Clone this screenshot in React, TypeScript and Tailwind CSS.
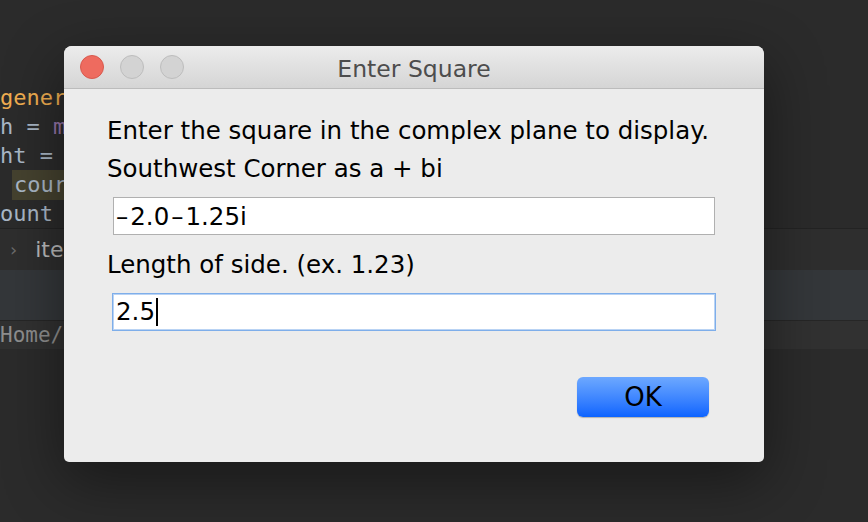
export default function App() {
  return (
    <div className="relative w-[868px] h-[522px] overflow-hidden bg-[#2b2b2b]">
      {/* Editor behind the dialog */}
      <div className="flex flex-col pt-[83px] font-['DejaVu_Sans_Mono',monospace] text-[22px] leading-[29px] text-[#a9b7c6]">
        <div className="h-[29px] whitespace-pre text-[#f0ad50]">gener</div>
        <div className="h-[29px] whitespace-pre">
          h = <span className="text-[#9876aa]">m</span>
        </div>
        <div className="h-[29px] whitespace-pre">ht = </div>
        <div className="h-[29px] whitespace-pre">
          <span className="ml-[12px] inline-block h-[30px] w-[80px] bg-[#45422f] pl-[2px]">cour</span>
        </div>
        <div className="h-[29px] whitespace-pre">ount</div>

        <div className="h-[1px] bg-[#232323]" />
        <div className="flex h-[41px] items-center gap-[18px] bg-[#2e2e2e] pl-[10px] font-['DejaVu_Sans',sans-serif] text-[22px] text-[#bbbbbb]">
          <span className="text-[18px] text-[#6b6b6b]">›</span>
          <span>iter</span>
        </div>
        <div className="h-[50px] bg-[#34373a]" />
        <div className="h-[1px] bg-[#262626]" />
        <div className="flex h-[28px] items-center bg-[#313131] text-[21px] text-[#8e8e8e]">Home/</div>
      </div>

      {/* Dialog */}
      <div className="absolute left-[64px] top-[46px] flex h-[416px] w-[700px] flex-col overflow-hidden rounded-t-[8px] rounded-b-[5px] bg-[#ececec] font-['DejaVu_Sans',sans-serif] shadow-[0_18px_60px_rgba(0,0,0,0.45)]">
        <div className="grid h-[43px] grid-cols-[1fr_auto_1fr] items-center border-b border-[#bcbcbc] bg-gradient-to-b from-[#ececec] to-[#d5d5d5]">
          <div className="flex items-center gap-[16px] pl-[16px]">
            <div className="h-[24px] w-[24px] rounded-full border border-[#d8594d] bg-[#ee6b5f]" />
            <div className="h-[24px] w-[24px] rounded-full border border-[#bdbdbd] bg-[#d3d3d3]" />
            <div className="h-[24px] w-[24px] rounded-full border border-[#bdbdbd] bg-[#d3d3d3]" />
          </div>
          <div className="pt-[3px] text-[23.5px] leading-[30px] text-[#4d4d4d]">Enter Square</div>
          <div />
        </div>

        <div className="flex flex-1 flex-col pl-[43px] pr-[49px] pt-[27px] text-[24.5px] leading-[30px] text-black">
          <div>Enter the square in the complex plane to display.</div>
          <div className="mt-[8px]">Southwest Corner as a + bi</div>
          <div className="ml-[6px] mt-[13px] h-[38px] border border-[#b0b0b0] bg-white pl-[2px] pt-[4px]">
            <span className="mr-[2px]">–</span>2.0<span className="mx-[2px]">–</span>1.25i
          </div>
          <div className="mt-[15px]">Length of side. (ex. 1.23)</div>
          <div className="ml-[5px] mr-[-1px] mt-[13px] h-[38px] border border-[#7eaeea] bg-white pl-[3px] pt-[3px] shadow-[inset_0_0_0_1px_#b9d3f4]">
            2.5<span className="ml-[1px] inline-block h-[28px] w-[2px] bg-black align-[-6px]" />
          </div>
          <button className="mr-[6px] mt-[46px] h-[40px] w-[132px] self-end rounded-[6px] bg-gradient-to-b from-[#6da8ff] to-[#0b63ff] text-[26px] leading-[40px] text-black shadow-[0_1px_1px_rgba(0,0,0,0.25)]">
            OK
          </button>
        </div>
      </div>
    </div>
  )
}
